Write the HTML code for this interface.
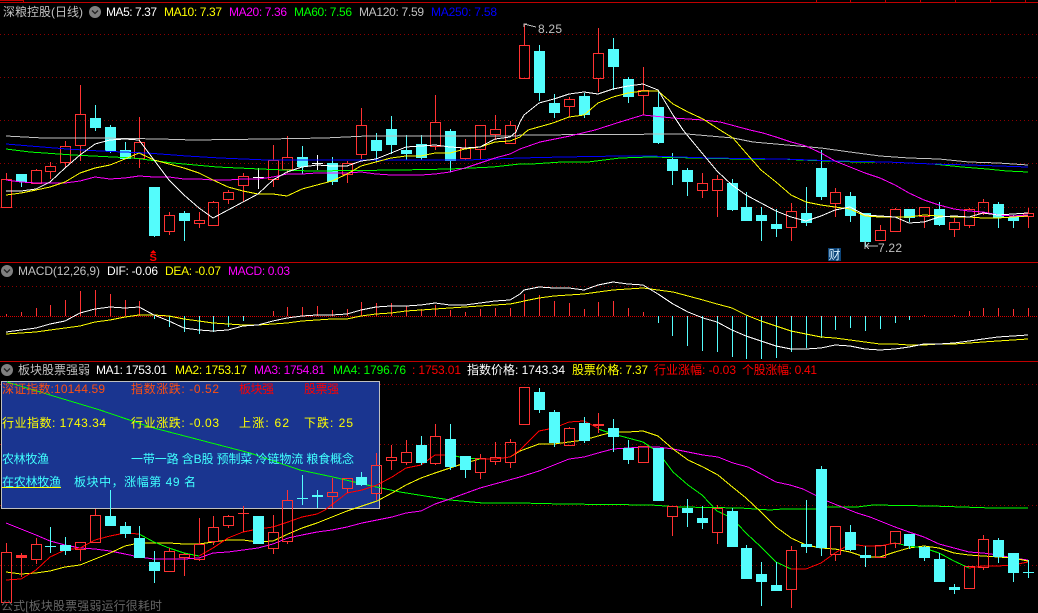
<!DOCTYPE html>
<html lang="zh"><head><meta charset="utf-8"><title>深粮控股</title>
<style>
html,body{margin:0;padding:0;background:#000;width:1038px;height:613px;overflow:hidden}
svg{display:block;position:absolute;left:0;top:0}
text{font-family:"Liberation Sans","Noto Sans CJK SC",sans-serif;font-size:12px}
.l{fill:none;stroke-width:1;shape-rendering:crispEdges}
.g{stroke-dasharray:1 3;stroke:#8c0000;shape-rendering:crispEdges;stroke-width:1}
</style></head><body>
<svg width="1038" height="613" viewBox="0 0 1038 613" xmlns="http://www.w3.org/2000/svg">
<rect width="1038" height="613" fill="#000"/>
<!-- frame lines -->
<path shape-rendering="crispEdges" stroke="#c00000" fill="none" d="M0 2.5H1038M0 262.5H1038M0 361.5H1038M0 .5H23M23.5 0V2M816.5 0V2M850.5 0V2M885.5 0V2M920.5 0V2M955.5 0V2M990.5 0V2M1025.5 0V2"/>
<!-- grid -->
<path class="g" d="M0 34.5H1038M0 77.5H1038M0 120.5H1038M0 163.5H1038M0 207.5H1038M0 286.5H1038M0 384.5H1038M0 444.5H1038M0 505.5H1038M0 565.5H1038"/>
<path d="M0 316.5H1038" stroke="#d80000" stroke-dasharray="1 1" shape-rendering="crispEdges"/>

<!-- PANEL 1 candles -->
<path class="l" stroke="#ff3232" d="M6.5 173V179M1.5 179.5h10v28h-10zM36.5 169V170M31.5 170.5h10v13h-10zM50.5 162V166M45.5 166.5h10v5h-10zM50.5 171V179M65.5 141V146M60.5 146.5h10v16h-10zM65.5 162V168M80.5 85V114M75.5 114.5h10v31h-10zM80.5 145V161M139.5 117V142M134.5 142.5h10v16h-10zM139.5 158V168M169.5 212V215M164.5 215.5h10v16h-10zM169.5 231V235M199.5 212V220M194.5 220.5h10v3h-10zM199.5 223V228M213.5 201V202M208.5 202.5h10v23h-10zM213.5 225V226M228.5 190V192M223.5 192.5h10v7h-10zM228.5 199V204M243.5 173V176M238.5 176.5h10v9h-10zM243.5 185V202M273.5 145V160M268.5 160.5h10v19h-10zM273.5 179V187M287.5 136V157M282.5 157.5h10v12h-10zM287.5 169V173M347.5 161V163M342.5 163.5h10v11h-10zM347.5 174V183M361.5 108V125M356.5 125.5h10v29h-10zM361.5 154V159M435.5 95V122M430.5 122.5h10v24h-10zM435.5 146V150M465.5 139V148M460.5 148.5h10v10h-10zM465.5 158V160M475.5 125.5h10v24h-10zM480.5 149V159M495.5 115V129M490.5 129.5h10v5h-10zM495.5 134V140M510.5 121V125M505.5 125.5h10v18h-10zM524.5 24V45M519.5 45.5h10v33h-10zM524.5 78V79M569.5 97V99M564.5 99.5h10v7h-10zM569.5 106V117M598.5 28V53M593.5 53.5h10v25h-10zM598.5 78V92M643.5 67V90M638.5 90.5h10v5h-10zM643.5 95V115M702.5 173V183M697.5 183.5h10v7h-10zM702.5 190V198M717.5 175V179M712.5 179.5h10v11h-10zM717.5 190V217M791.5 203V211M786.5 211.5h10v16h-10zM791.5 227V241M835.5 188V192M830.5 192.5h10v11h-10zM835.5 203V217M880.5 225V230M875.5 230.5h10v10h-10zM880.5 240V241M895.5 208V209M890.5 209.5h10v22h-10zM919.5 207.5h10v9h-10zM924.5 216V228M954.5 218V222M949.5 222.5h10v7h-10zM954.5 229V237M969.5 208V209M964.5 209.5h10v16h-10zM969.5 225V228M983.5 199V202M978.5 202.5h10v11h-10zM983.5 213V215M1028.5 208V213M1023.5 213.5h10v3h-10zM1028.5 216V228"/>
<path class="l" stroke="#54fcfc" d="M21.5 174V187M95.5 105V131M110.5 125V153M125.5 142V158M154.5 187V237M184.5 211V241M302.5 146V174M332.5 157V185M376.5 133V162M391.5 116V154M406.5 135V160M421.5 135V160M450.5 129V172M539.5 45V101M554.5 94V118M584.5 93V118M613.5 38V90M628.5 77V103M658.5 90V144M672.5 153V185M687.5 168V196M732.5 179V211M746.5 192V220M761.5 207V241M776.5 209V237M806.5 187V226M821.5 150V200M850.5 192V222M865.5 213V247M909.5 209V222M939.5 202V226M998.5 202V228M1013.5 215V228"/>
<path fill="#54fcfc" shape-rendering="crispEdges" d="M16 174h11v8h-11zM90 118h11v10h-11zM105 127h11v24h-11zM120 150h11v9h-11zM149 187h11v49h-11zM179 213h11v8h-11zM297 157h11v10h-11zM327 163h11v19h-11zM371 140h11v11h-11zM386 129h11v16h-11zM401 150h11v4h-11zM416 144h11v14h-11zM445 131h11v30h-11zM534 51h11v42h-11zM549 103h11v10h-11zM579 96h11v19h-11zM608 49h11v18h-11zM623 79h11v18h-11zM653 107h11v36h-11zM667 159h11v12h-11zM682 170h11v12h-11zM727 183h11v27h-11zM741 207h11v14h-11zM756 215h11v6h-11zM771 224h11v5h-11zM801 213h11v10h-11zM816 168h11v29h-11zM845 196h11v20h-11zM860 213h11v29h-11zM904 209h11v9h-11zM934 209h11v16h-11zM993 204h11v14h-11zM1008 217h11v4h-11z"/>
<path class="l" stroke="#ffffff" d="M258.5 168V189M253 177.5H264M317.5 155V170M312 163.5H323"/>
<!-- PANEL 1 lines -->
<polyline class="l" stroke="#c0c0c0" points="6,136 43,138 100,138 160,139 193,140 267,139 325,138 367,136 517,136 520,135 687,134 710,136 733,138 753,142 787,145 821,148 850,152 880,156 909,158 939,159 969,162 998,163 1028,165"/>
<polyline class="l" stroke="#00ff00" points="6,149 30,152 73,155 133,158 173,163 217,167 260,169 310,171 400,170 450,169 493,167 520,164 532,164 562,162 588,162 620,158 650,157 697,158 740,159 783,159 800,160 857,162 887,162 932,164 943,165 962,167 987,169 1007,171 1028,172"/>
<polyline class="l" stroke="#0000ff" points="6,144 30,146 67,149 100,151 147,153 187,156 220,158 267,160 467,160 520,158 563,157 620,156 650,156 710,158 783,159 837,161 887,162 932,164 970,165 1028,167"/>
<polyline class="l" stroke="#ff00ff" points="6,180 21,182 36,183 50,183 65,183 80,181 95,177 110,179 125,178 139,176 154,177 169,177 184,179 199,179 213,180 228,180 243,179 258,179 273,177 287,174 302,174 317,173 332,173 347,173 361,172 376,174 391,175 406,175 421,175 435,174 450,172 465,168 480,163 495,158 510,154 520,149 540,142 570,136 595,130 620,122 643,115 673,118 703,120 720,122 750,130 763,133 776,137 791,142 806,146 821,153 835,161 850,167 865,173 880,178 895,185 909,193 924,200 939,205 954,209 969,211 983,212 998,215 1013,216 1028,215"/>
<polyline class="l" stroke="#ffff00" points="6,195 21,193 36,190 50,187 65,182 80,173 95,168 110,165 125,159 139,153 154,160 169,164 184,168 199,173 213,180 228,187 243,191 258,194 273,194 287,196 302,189 317,185 332,181 347,174 361,166 376,162 391,158 406,156 421,156 435,153 450,153 465,149 480,147 495,142 510,141 520,137 528,130 553,123 569,117 584,115 598,103 613,97 628,93 643,91 658,91 673,104 688,112 703,119 720,130 733,138 746,153 761,170 776,182 791,195 806,202 821,205 835,207 850,209 865,216 880,217 895,217 909,217 924,215 939,216 954,217 969,217 983,218 998,218 1013,217 1028,216"/>
<polyline class="l" stroke="#ffffff" points="6,191 21,191 36,189 50,182 65,168 80,155 95,144 110,140 125,139 139,140 154,160 169,180 184,195 199,208 213,218 228,210 243,202 258,194 273,180 287,172 302,167 317,165 332,166 347,166 361,161 376,159 391,153 406,147 421,146 435,145 450,147 465,148 480,147 495,139 510,137 516,132 520,122 524,115 539,103 554,99 569,94 584,92 598,94 613,89 628,86 643,84 658,90 673,115 683,130 702,153 717,171 732,185 746,195 761,203 776,211 791,217 806,221 821,216 835,210 850,207 865,215 880,216 895,217 909,223 924,222 939,217 954,216 969,217 983,213 998,215 1013,214 1028,213"/>
<!-- annotations -->
<path class="l" stroke="#c0c0c0" d="M524 27V24H527M524 24L536 27M865 241V249M866 246H878M866 246L869 243M866 246L869 249"/>
<text x="538" y="33" fill="#c0c0c0" textLength="24">8.25</text>
<text x="878" y="252" fill="#c0c0c0" textLength="24">7.22</text>
<path fill="#ff0000" shape-rendering="crispEdges" d="M153 250l3 3h-6z"/>
<text x="149.500" y="261" fill="#ff0000" font-weight="bold" style="font-size:11px">S</text>
<rect x="828" y="248" width="13" height="13" fill="#0c4478"/>
<text x="828.500" y="259" fill="#d8f0ff">财</text>

<!-- PANEL 2 MACD bars -->
<path class="l" stroke="#ff3232" d="M6.5 314V316M21.500 312V316M36.500 308V316M50.500 305V316M65.500 300V316M80.500 291V316M95.500 290V316M110.500 294V316M125.500 300V316M139.500 301V316M273.500 311V316M287.500 307V316M302.500 307V316M317.500 306V316M332.500 310V316M347.500 309V316M361.500 302V316M376.500 303V316M391.500 303V316M406.500 306V316M421.500 309V316M435.500 305V316M450.500 310V316M465.500 312V316M480.500 309V316M495.500 308V316M510.500 308V316M524.500 294V316M539.500 295V316M554.500 301V316M569.500 303V316M584.500 309V316M598.500 302V316M613.500 301V316M628.500 308V316M643.500 312V316M924.500 315V316M954.500 315V316M969.500 311V316M983.500 308V316M998.500 308V316M1013.500 309V316M1028.500 308V316"/>
<path class="l" stroke="#54fcfc" d="M154.500 316V319M169.500 316V327M184.500 316V332M199.500 316V334M213.500 316V332M228.500 316V327M243.500 316V321M658.500 316V323M672.500 316V336M687.500 316V346M702.500 316V351M717.500 316V352M732.500 316V357M746.500 316V359M761.500 316V359M776.500 316V358M791.500 316V352M806.500 316V348M821.500 316V338M835.500 316V330M850.500 316V328M865.500 316V331M880.500 316V329M895.500 316V323M909.500 316V320"/>
<polyline class="l" stroke="#ffff00" points="6,334 21,333 36,332 50,330 65,328 80,326 95,322 110,320 125,317 139,315 154,315 169,316 184,319 199,321 213,323 228,324 243,325 258,325 273,324 287,323 302,321 317,320 332,319 347,319 361,316 376,314 391,313 406,311 421,310 435,309 450,308 465,307 480,306 495,305 510,304 520,302 524,301 539,298 554,296 569,295 584,294 598,292 613,290 628,289 643,288 658,290 673,292 688,296 703,300 717,304 732,308 746,315 761,321 776,326 791,331 806,334 821,337 835,338 850,340 865,342 880,344 895,344 909,345 924,345 939,344 954,344 969,343 983,342 998,341 1013,340 1028,339"/>
<polyline class="l" stroke="#ffffff" points="6,332 21,330 36,328 50,324 65,321 80,313 95,309 110,307 125,308 139,307 154,315 169,321 184,328 199,330 213,331 228,330 243,326 258,325 273,321 287,318 302,316 317,315 332,315 347,314 361,310 376,307 391,306 406,306 421,305 435,303 450,305 465,305 480,303 495,301 510,300 520,294 524,290 539,287 554,288 569,288 584,290 598,285 613,282 628,284 643,285 658,294 673,304 688,312 703,318 717,322 732,330 746,336 761,341 776,346 791,349 806,349 821,348 835,345 850,346 865,349 880,350 895,349 909,347 924,344 939,344 954,343 969,341 983,339 998,337 1013,336 1028,335"/>

<!-- PANEL 3 box -->
<rect x="1.500" y="381.500" width="378" height="127" fill="#1a3590" stroke="#c0c0c0" shape-rendering="crispEdges"/>
<!-- PANEL 3 lines -->
<polyline class="l" stroke="#00ff00" points="7,382 50,395 100,410 150,427 200,440 250,453 300,470 333,477 367,485 400,492 450,500 483,503 520,503 562,504 651,505 680,507 740,508 770,510 783,509 815,509 828,507 857,507 873,505 932,506 962,507 992,508 1028,508"/>
<polyline class="l" stroke="#ff00ff" points="6,523 21,529 36,535 50,541 65,545 80,548 95,549 110,551 125,554 139,557 154,559 169,559 184,559 199,558 213,553 228,552 243,550 258,548 273,544 288,538 302,535 317,532 332,530 347,527 362,523 377,520 392,517 406,513 421,511 435,504 447,500 480,488 520,477 539,471 554,465 569,459 584,457 598,453 613,449 628,448 643,447 658,447 673,449 688,452 703,455 718,457 733,463 748,467 763,475 776,482 790,485 803,489 815,495 827,501 842,507 857,513 870,517 880,521 895,527 909,532 924,537 939,544 954,548 969,552 983,553 998,555 1013,558 1028,560"/>
<polyline class="l" stroke="#ffff00" points="6,572 21,574 36,573 50,571 65,567 80,565 95,559 110,553 125,546 139,543 154,543 169,543 184,544 199,544 213,542 228,540 243,540 258,542 273,541 288,534 302,528 317,523 332,517 347,511 362,506 377,501 392,493 406,485 421,478 435,473 450,468 465,463 480,459 495,459 510,457 520,451 539,444 554,444 569,442 584,440 598,436 613,432 628,432 643,431 658,436 673,449 688,460 703,467 718,475 730,485 746,498 761,512 776,527 791,538 806,545 821,548 835,549 850,552 865,557 880,557 895,552 909,548 924,546 939,548 954,553 969,555 983,556 998,557 1013,558 1028,561"/>
<polyline class="l" stroke="#ff0000" points="6,580 21,579 36,570 50,557 65,550 80,548 95,540 110,536 125,533 139,534"/>
<polyline class="l" stroke="#00ff00" points="139,534 154,542 169,548 184,553 199,556"/>
<polyline class="l" stroke="#ff0000" points="199,556 213,548 228,538 243,532 258,529 273,527 288,522 302,517 317,514 325,510 347,493 362,490 377,485 392,477 406,468 421,465 435,455 450,455"/>
<polyline class="l" stroke="#00ff00" points="450,455 465,458 480,459"/>
<polyline class="l" stroke="#ff0000" points="480,459 495,459 510,457 520,450 524,446 539,431 554,428 569,422 584,421 598,428"/>
<polyline class="l" stroke="#00ff00" points="598,429 613,434 628,438 643,442 658,452 673,472 688,485 702,495 717,511 732,518 746,533 761,547 776,562 791,569"/>
<polyline class="l" stroke="#ff0000" points="791,569 806,569 821,563 835,553 850,544 865,546 880,546 895,543"/>
<polyline class="l" stroke="#00ff00" points="895,543 909,546 924,548 939,553 954,561 969,568"/>
<polyline class="l" stroke="#ff0000" points="969,568 983,566 998,566 1013,565 1028,562"/>
<!-- PANEL 3 candles -->
<path class="l" stroke="#ff3232" d="M6.500 543V552M1.500 552.500h10v50h-10zM36.500 538V544M31.500 544.500h10v15h-10zM36.500 559V564M75.500 542.500h10v7h-10zM80.500 549V561M95.500 509V515M90.500 515.500h10v27h-10zM169.500 548V551M164.500 551.500h10v20h-10zM184.500 553V554M179.500 554.500h10v3h-10zM184.500 557V576M199.500 518V544M194.500 544.500h10v15h-10zM199.500 559V561M213.500 516V527M208.500 527.500h10v14h-10zM213.500 541V545M228.500 515V516M223.500 516.500h10v9h-10zM228.500 525V528M273.500 515V532M268.500 532.500h10v16h-10zM273.500 548V554M287.500 490V500M282.500 500.500h10v41h-10zM287.500 541V544M332.500 478V492M327.500 492.500h10v4h-10zM332.500 496V508M342.500 478.500h10v10h-10zM347.500 488V493M376.500 453V465M371.500 465.500h10v28h-10zM376.500 493V500M391.500 445V457M386.500 457.500h10v3h-10zM391.500 460V470M406.500 440V452M401.500 452.500h10v10h-10zM406.500 462V465M435.500 424V436M430.500 436.500h10v27h-10zM435.500 463V465M480.500 454V458M475.500 458.500h10v14h-10zM480.500 472V479M495.500 442V457M490.500 457.500h10v4h-10zM495.500 461V465M510.500 439V442M505.500 442.500h10v20h-10zM510.500 462V468M519.500 387.500h10v37h-10zM524.500 424V425M569.500 427V428M564.500 428.500h10v17h-10zM638.500 446.500h10v16h-10zM667.500 506.500h10v10h-10zM672.500 516V536M717.500 505V508M712.500 508.500h10v24h-10zM717.500 532V544M791.500 546V550M786.500 550.500h10v39h-10zM791.500 589V608M830.500 526.500h10v28h-10zM835.500 554V561M875.500 545.500h10v12h-10zM890.500 531.500h10v12h-10zM895.500 543V548M964.500 566.500h10v22h-10zM983.500 535V539M978.500 539.500h10v28h-10zM983.500 567V570M21.500 553V577M243.500 506V532M238 513.500H249M598.500 413V433"/>
<path fill="#ff3232" shape-rendering="crispEdges" d="M16 555h11v3h-11zM593 424h11v2h-11z"/>
<path class="l" stroke="#54fcfc" d="M65.500 537V555M110.500 490V525M125.500 522V538M139.500 526V557M154.500 551V583M258.500 516V543M361.500 472V486M421.500 436V465M450.500 424V470M465.500 456V478M539.500 388V413M554.500 410V447M584.500 417V443M613.500 419V452M628.500 440V464M658.500 448V500M687.500 499V527M702.500 506V529M732.500 508V546M746.500 545V578M761.500 562V606M776.500 562V590M806.500 500V553M821.500 466V556M850.500 525V551M909.500 534V549M924.500 546V561M939.500 553V582M998.500 538V563M1013.500 553V582M50.500 527V553M45 546.500H56M302.500 475V505M297 498.500H308M317.500 490V508M865.500 546V567M954.500 584V594M1028.500 560V578M1023 572.500H1034"/>
<path fill="#54fcfc" shape-rendering="crispEdges" d="M60 545h11v6h-11zM105 516h11v10h-11zM120 526h11v8h-11zM134 538h11v20h-11zM149 562h11v9h-11zM253 516h11v28h-11zM356 477h11v8h-11zM416 445h11v18h-11zM445 439h11v28h-11zM460 456h11v14h-11zM534 392h11v18h-11zM549 412h11v31h-11zM579 423h11v18h-11zM608 428h11v9h-11zM623 448h11v12h-11zM653 448h11v53h-11zM682 508h11v5h-11zM697 518h11v5h-11zM727 511h11v36h-11zM741 548h11v31h-11zM756 574h11v8h-11zM771 585h11v6h-11zM801 544h11v3h-11zM816 469h11v79h-11zM845 532h11v18h-11zM904 534h11v12h-11zM919 547h11v11h-11zM934 559h11v23h-11zM993 540h11v17h-11zM1008 553h11v20h-11zM312 495h11v2h-11zM860 555h11v3h-11zM949 587h11v3h-11z"/>

<!-- HEADER 1 -->
<text x="3" y="16" fill="#c0c0c0" textLength="80" style="font-size:12px">深粮控股(日线)</text>
<circle cx="95" cy="12" r="6" fill="#808080"/><path d="M92 10.500l3 3 3-3" stroke="#222" fill="none" stroke-width="1.300"/>
<text x="106" y="16" fill="#ffffff" textLength="51">MA5: 7.37</text>
<text x="164" y="16" fill="#ffff00" textLength="58">MA10: 7.37</text>
<text x="229" y="16" fill="#ff00ff" textLength="58">MA20: 7.36</text>
<text x="294" y="16" fill="#00ff00" textLength="58">MA60: 7.56</text>
<text x="359" y="16" fill="#c0c0c0" textLength="65">MA120: 7.59</text>
<text x="431" y="16" fill="#0000ff" textLength="66">MA250: 7.58</text>

<!-- HEADER 2 -->
<circle cx="7" cy="271" r="6" fill="#808080"/><path d="M4 269.500l3 3 3-3" stroke="#222" fill="none" stroke-width="1.300"/>
<text x="18" y="275" fill="#c0c0c0" textLength="82">MACD(12,26,9)</text>
<text x="107" y="275" fill="#ffffff" textLength="51">DIF: -0.06</text>
<text x="165" y="275" fill="#ffff00" textLength="56">DEA: -0.07</text>
<text x="228" y="275" fill="#ff00ff" textLength="62">MACD: 0.03</text>

<!-- HEADER 3 -->
<circle cx="7" cy="370" r="6" fill="#808080"/><path d="M4 368.500l3 3 3-3" stroke="#222" fill="none" stroke-width="1.300"/>
<text x="18" y="374" fill="#c0c0c0" textLength="72">板块股票强弱</text>
<text x="96" y="374" fill="#ffffff" textLength="71">MA1: 1753.01</text>
<text x="175" y="374" fill="#ffff00" textLength="72">MA2: 1753.17</text>
<text x="254" y="374" fill="#ff00ff" textLength="71">MA3: 1754.81</text>
<text x="333" y="374" fill="#00ff00" textLength="73">MA4: 1796.76</text>
<text x="412" y="374" fill="#ff0000" textLength="49">: 1753.01</text>
<text x="467" y="374" fill="#ffffff" textLength="98">指数价格: 1743.34</text>
<text x="572" y="374" fill="#ffff00" textLength="76">股票价格: 7.37</text>
<text x="654" y="374" fill="#ff0000" textLength="82">行业涨幅: -0.03</text>
<text x="742" y="374" fill="#ff0000" textLength="75">个股涨幅: 0.41</text>

<!-- BOX TEXT -->
<text x="2" y="393" fill="#ff5010" textLength="103">深证指数:10144.59</text>
<text x="131" y="393" fill="#ff5010" textLength="88">指数涨跌: -0.52</text>
<text x="239" y="393" fill="#ff0000" textLength="35">板块强</text>
<text x="304" y="393" fill="#ff0000" textLength="35">股票强</text>
<text x="2" y="427" fill="#ffff00" textLength="104">行业指数: 1743.34</text>
<text x="131" y="427" fill="#ffff00" textLength="88">行业涨跌: -0.03</text>
<text x="239" y="427" fill="#ffff00" textLength="50">上涨: 62</text>
<text x="304" y="427" fill="#ffff00" textLength="49">下跌: 25</text>
<text x="2" y="463" fill="#40ffff" textLength="47">农林牧渔</text>
<text x="131" y="463" fill="#40ffff" textLength="223">一带一路 含B股 预制菜 冷链物流 粮食概念</text>
<text x="2" y="486" fill="#40ffff" textLength="59">在农林牧渔</text>
<path d="M2 487.500H61" stroke="#ffff00" shape-rendering="crispEdges"/>
<text x="74" y="486" fill="#40ffff" textLength="122">板块中，涨幅第 49 名</text>

<text x="1" y="610" fill="#666666" textLength="161">公式[板块股票强弱运行很耗时</text>
</svg>
</body></html>
